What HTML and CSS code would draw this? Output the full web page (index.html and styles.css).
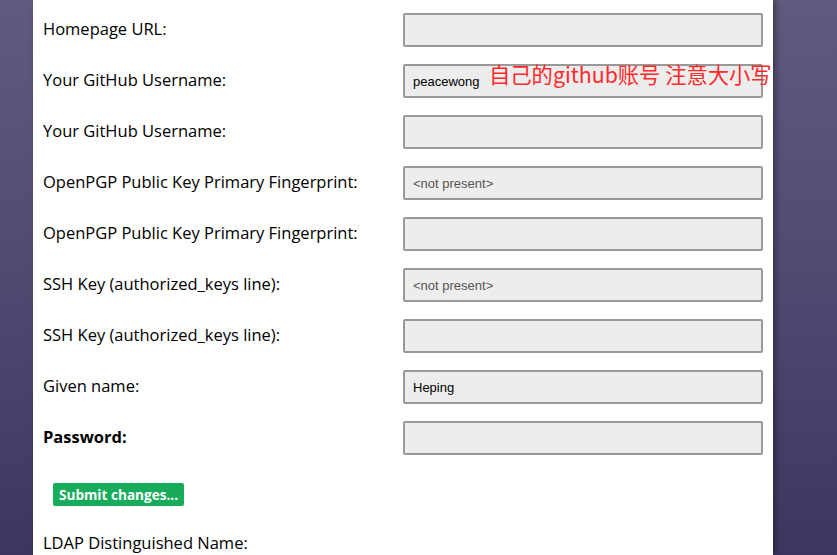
FILE: index.html
```html
<!DOCTYPE html>
<html>
<head>
<meta charset="utf-8">
<link rel="stylesheet" href="styles.css">
</head>
<body>
<div class="page">
  <form class="panel">
    <div class="row"><label class="lbl">Homepage URL:</label><div class="field"></div></div>
    <div class="row"><label class="lbl">Your GitHub Username:</label><div class="field">peacewong</div>
      <span class="note">自己的github账号 注意大小写</span></div>
    <div class="row"><label class="lbl">Your GitHub Username:</label><div class="field"></div></div>
    <div class="row"><label class="lbl">OpenPGP Public Key Primary Fingerprint:</label><div class="field muted">&lt;not present&gt;</div></div>
    <div class="row"><label class="lbl">OpenPGP Public Key Primary Fingerprint:</label><div class="field"></div></div>
    <div class="row"><label class="lbl">SSH Key (authorized_keys line):</label><div class="field muted">&lt;not present&gt;</div></div>
    <div class="row"><label class="lbl">SSH Key (authorized_keys line):</label><div class="field"></div></div>
    <div class="row"><label class="lbl">Given name:</label><div class="field">Heping</div></div>
    <div class="row"><label class="lbl bold">Password:</label><div class="field"></div></div>
    <div class="actions"><button type="button" class="submit">Submit changes...</button></div>
    <div class="ldap">LDAP Distinguished Name:</div>
  </form>
</div>
</body>
</html>
```
FILE: styles.css
```css
html, body {
  margin: 0;
  padding: 0;
  height: 100%;
}
body {
  background: linear-gradient(to bottom, #615a7f 0%, #4f4a72 50%, #3c3760 100%);
  font-family: "Open Sans", "Noto Sans", sans-serif;
  overflow: hidden;
}
.page {
  display: flex;
  height: 100%;
}
.panel {
  margin-left: 33px;
  width: 740px;
  background: #fff;
  box-shadow: 3px 0 6px rgba(0, 0, 0, 0.35);
  padding: 13px 0 0 10px;
  box-sizing: border-box;
  display: flex;
  flex-direction: column;
}
.row {
  position: relative;
  display: grid;
  grid-template-columns: 360px 360px;
  align-items: center;
  height: 34px;
  margin-bottom: 17px;
}
.lbl {
  font-size: 16.5px;
  color: #000;
  line-height: 20px;
  margin-top: -3px;
}
.bold {
  font-weight: bold;
}
.field {
  box-sizing: border-box;
  height: 34px;
  border: 2px solid #999;
  border-radius: 2px;
  background: #ededed;
  font-family: "Liberation Sans", Arial, sans-serif;
  font-size: 13px;
  color: #000;
  padding: 0 8px;
  display: flex;
  align-items: center;
}
.muted {
  color: #555;
}
.note {
  position: absolute;
  left: 446px;
  top: -2px;
  font-family: "Noto Sans CJK SC", "Noto Sans", sans-serif;
  font-size: 21.3px;
  line-height: 24px;
  color: #ff2a2a;
  white-space: nowrap;
}
.actions {
  margin-top: 11px;
  padding-left: 10px;
}
.submit {
  background: #17ab5c;
  color: #fff;
  border: none;
  border-radius: 2px;
  font-family: "Open Sans", "Noto Sans", sans-serif;
  font-weight: bold;
  font-size: 13.6px;
  height: 23px;
  padding: 0 6px;
  line-height: 23px;
}
.ldap {
  margin-top: 26px;
  font-size: 16.5px;
  line-height: 22px;
  color: #000;
}
```
